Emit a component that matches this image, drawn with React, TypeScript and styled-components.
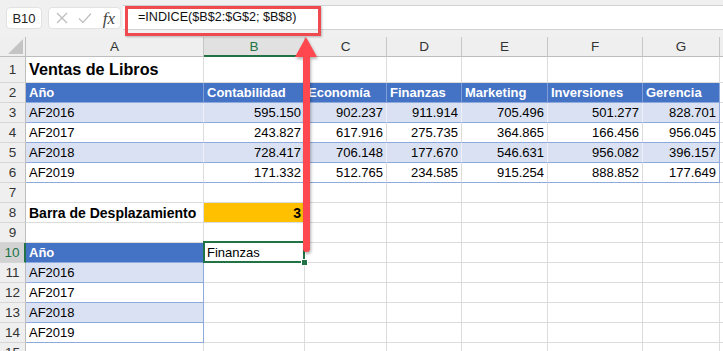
import { Fragment } from "react";
import styled, { createGlobalStyle, css } from "styled-components";

const GlobalStyle = createGlobalStyle`
  body {
    margin: 0;
    font-family: "Liberation Sans", Arial, sans-serif;
    background: #fff;
  }
`;

const Page = styled.div`
  width: 723px;
  height: 351px;
  overflow: hidden;
  position: relative;
  background: #fff;
  color: #000;
`;

const FormulaBar = styled.div`
  display: flex;
  height: 37px;
  box-sizing: border-box;
  padding: 5px 0 0 6px;
  gap: 6px;
  background: #f0f0f0;
`;

const RoundBox = styled.div`
  margin-top: 2px;
  height: 22px;
  box-sizing: border-box;
  background: #fff;
  border: 1px solid #e2e2e2;
  border-radius: 4px;
  display: flex;
  align-items: center;
`;

const NameBox = styled(RoundBox)`
  width: 36px;
  justify-content: center;
  font-size: 13px;
  color: #222;
`;

const FxBox = styled(RoundBox)`
  width: 73px;
  padding: 0 5px 0 7px;
  justify-content: space-between;
`;

const Fx = styled.span`
  font-family: "Liberation Serif", "Times New Roman", serif;
  font-style: italic;
  font-size: 17px;
  color: #444;
  line-height: 1;
`;

const FormulaInput = styled.div`
  flex: 1;
  margin-left: -4px;
  height: 25px;
  box-sizing: border-box;
  background: #fff;
  border-top: 1px solid #d2d2d2;
  border-bottom: 1px solid #d2d2d2;
  position: relative;
  padding-left: 15px;
  font-size: 12.6px;
  line-height: 23px;
  color: #111;
`;

const RedFrame = styled.div`
  position: absolute;
  left: 2px;
  top: 0;
  width: 196px;
  height: 30px;
  box-sizing: border-box;
  border: 3px solid #ef4a50;
  box-shadow: 1px 1px 2px rgba(0, 0, 0, 0.25);
`;

const Sheet = styled.div`
  display: grid;
  grid-template-columns: 26px 178px 101px 82px 75px 86px 95px 77px 1fr;
  grid-template-rows: 20px 26px repeat(14, 20px);
`;

const HeadBase = css`
  background: #efefef;
  box-sizing: border-box;
  display: flex;
  align-items: center;
  justify-content: center;
  font-size: 13.5px;
  color: #333;
`;

const Corner = styled.div`
  ${HeadBase};
  border-right: 1px solid #bdbdbd;
  border-bottom: 1px solid #bdbdbd;
  position: relative;
  svg {
    position: absolute;
    right: 2px;
    bottom: 2px;
  }
`;

const ColHead = styled.div<{ $active?: boolean }>`
  ${HeadBase};
  border-right: 1px solid #c6c6c6;
  border-bottom: 1px solid #bdbdbd;
  ${(p) =>
    p.$active &&
    css`
      background: #e1e1e1;
      color: #217346;
      border-bottom: 2px solid #217346;
    `}
`;

const RowHead = styled.div<{ $active?: boolean }>`
  ${HeadBase};
  border-right: 1px solid #bdbdbd;
  border-bottom: 1px solid #d6d6d6;
  ${(p) =>
    p.$active &&
    css`
      background: #d2d2d2;
      color: #217346;
      border-right: 2px solid #217346;
    `}
`;

const Cell = styled.div<{
  $fill?: string;
  $bold?: boolean;
  $right?: boolean;
  $color?: string;
  $size?: number;
  $bb?: string;
  $br?: string;
  $selected?: boolean;
}>`
  box-sizing: border-box;
  position: relative;
  display: flex;
  align-items: center;
  justify-content: ${(p) => (p.$right ? "flex-end" : "flex-start")};
  padding: 0 3px;
  white-space: nowrap;
  font-size: ${(p) => p.$size ?? 13}px;
  font-weight: ${(p) => (p.$bold ? 700 : 400)};
  color: ${(p) => p.$color ?? "#000"};
  background: ${(p) => p.$fill ?? "#fff"};
  border-right: 1px solid ${(p) => p.$br ?? "#dcdcdc"};
  border-bottom: 1px solid ${(p) => p.$bb ?? "#dcdcdc"};
  ${(p) =>
    p.$selected &&
    css`
      &::after {
        content: "";
        position: absolute;
        inset: -2px -1px -1px -1px;
        border: 2px solid #217346;
      }
      &::before {
        content: "";
        position: absolute;
        right: -4px;
        bottom: -4px;
        width: 5px;
        height: 5px;
        background: #217346;
        border: 1px solid #fff;
        z-index: 2;
      }
    `}
`;

const Arrow = styled.svg`
  position: absolute;
  left: 290px;
  top: 30px;
  filter: drop-shadow(1px 2px 1.5px rgba(0, 0, 0, 0.3));
`;

const BLUE = "#4472c4";
const BAND = "#d9e1f2";
const LINE = "#8ea9db";

type CellDef = {
  text?: string;
  bold?: boolean;
  right?: boolean;
  fill?: string;
  color?: string;
  size?: number;
  bb?: string;
  br?: string;
  selected?: boolean;
};

const years = ["AF2016", "AF2017", "AF2018", "AF2019"];
const values = [
  ["595.150", "902.237", "911.914", "705.496", "501.277", "828.701"],
  ["243.827", "617.916", "275.735", "364.865", "166.456", "956.045"],
  ["728.417", "706.148", "177.670", "546.631", "956.082", "396.157"],
  ["171.332", "512.765", "234.585", "915.254", "888.852", "177.649"],
];
const heads = ["Año", "Contabilidad", "Economía", "Finanzas", "Marketing", "Inversiones", "Gerencia"];
const cols = ["A", "B", "C", "D", "E", "F", "G", ""];

const blank = (n: number): CellDef[] => Array.from({ length: n }, () => ({}));

const rows: CellDef[][] = [
  [{ text: "Ventas de Libros", bold: true, size: 16.2 }, ...blank(7)],
  [
    ...heads.map((h, i) => ({
      text: h,
      bold: true,
      fill: BLUE,
      color: "#fff",
      bb: LINE,
      br: i === 6 ? LINE : "#7f9dd6",
    })),
    {},
  ],
  ...values.map((vals, r) => {
    const fill = r % 2 === 0 ? BAND : "#fff";
    const br = r % 2 === 0 ? "#eef1f9" : "#dcdcdc";
    return [
      { text: years[r], fill, bb: LINE, br },
      ...vals.map((v, i) => ({ text: v, right: true, fill, bb: LINE, br: i === 5 ? LINE : br })),
      {},
    ];
  }),
  blank(8),
  [
    { text: "Barra de Desplazamiento", bold: true, size: 14 },
    { text: "3", bold: true, size: 14, right: true, fill: "#ffc000", br: "#ffc000" },
    ...blank(6),
  ],
  blank(8),
  [
    { text: "Año", bold: true, fill: BLUE, color: "#fff", bb: LINE, br: LINE },
    { text: "Finanzas", selected: true },
    ...blank(6),
  ],
  ...years.map((y, r) => [
    { text: y, fill: r % 2 === 0 ? BAND : "#fff", bb: LINE, br: LINE },
    ...blank(7),
  ]),
  blank(8),
];

const App = () => (
  <Page>
    <GlobalStyle />
    <FormulaBar>
      <NameBox>B10</NameBox>
      <FxBox>
        <svg width="12" height="12" viewBox="0 0 12 12">
          <path d="M1 1 L11 11 M11 1 L1 11" stroke="#bcbcbc" strokeWidth="1.2" fill="none" />
        </svg>
        <svg width="14" height="12" viewBox="0 0 14 12">
          <path d="M1 6.5 L5 10.5 L13 1.5" stroke="#bcbcbc" strokeWidth="1.2" fill="none" />
        </svg>
        <Fx>fx</Fx>
      </FxBox>
      <FormulaInput>
        <RedFrame />
        =INDICE($B$2:$G$2; $B$8)
      </FormulaInput>
    </FormulaBar>
    <Sheet>
      <Corner>
        <svg width="15" height="15" viewBox="0 0 15 15">
          <path d="M15 0 L15 15 L0 15 Z" fill="#c4c4c4" />
        </svg>
      </Corner>
      {cols.map((c, i) => (
        <ColHead key={i} $active={c === "B"}>
          {c}
        </ColHead>
      ))}
      {rows.map((row, r) => (
        <Fragment key={r}>
          <RowHead $active={r + 1 === 10}>{r + 1}</RowHead>
          {row.map((c, i) => (
            <Cell
              key={i}
              $fill={c.fill}
              $bold={c.bold}
              $right={c.right}
              $color={c.color}
              $size={c.size}
              $bb={c.bb}
              $br={c.br}
              $selected={c.selected}
            >
              {c.text}
            </Cell>
          ))}
        </Fragment>
      ))}
    </Sheet>
    <Arrow width="36" height="230" viewBox="0 0 36 230">
      <path d="M16 7 L27 27 L5 27 Z" fill="#ff474f" />
      <rect x="13" y="24" width="7" height="198" rx="3.5" fill="#ff474f" />
    </Arrow>
  </Page>
);

export default App;
